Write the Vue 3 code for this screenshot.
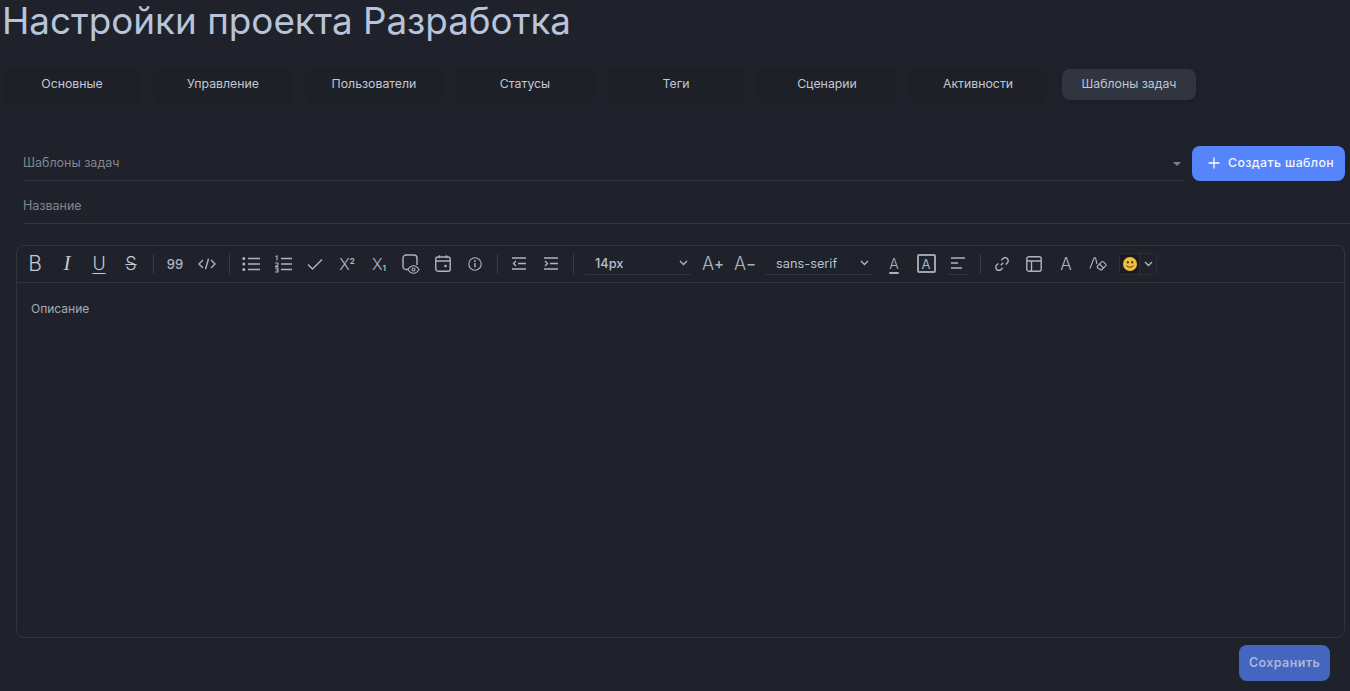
<script setup>
const tabs = ['Основные', 'Управление', 'Пользователи', 'Статусы', 'Теги', 'Сценарии', 'Активности', 'Шаблоны задач']
</script>

<template>
  <div class="page">
    <h1 class="title">Настройки проекта Разработка</h1>

    <div class="tabs">
      <button v-for="(t, i) in tabs" :key="t" class="tab" :class="{ active: i === tabs.length - 1 }">{{ t }}</button>
    </div>

    <div class="select-row">
      <div class="field select-field">
        <span>Шаблоны задач</span>
        <i class="caret"></i>
      </div>
      <button class="create">
        <svg width="12" height="12" viewBox="0 0 12 12"><path d="M6 .5v11M.5 6h11" stroke="#fff" stroke-width="1.3" fill="none"/></svg>
        <span>Создать шаблон</span>
      </button>
    </div>

    <div class="field name-field"><span>Название</span></div>

    <div class="editor">
      <div class="toolbar">
        <div class="tb t-big">B</div>
        <div class="tb t-big t-i">I</div>
        <div class="tb t-big t-u">U</div>
        <div class="tb t-big t-s">S</div>
        <div class="sep"></div>
        <div class="tb t-quote">99</div>
        <div class="tb">
          <svg width="18" height="12" viewBox="0 0 18 12"><path d="M5 2 1 6l4 4M13 2l4 4-4 4M10.500 .8 7.500 11.200" class="ic"/></svg>
        </div>
        <div class="sep"></div>
        <div class="tb">
          <svg width="18" height="16" viewBox="0 0 18 16"><path d="M6 2.500h12M6 8h12M6 13.500h12" class="ic"/><circle cx="1.800" cy="2.500" r="1.500" fill="#aeb4bf"/><circle cx="1.800" cy="8" r="1.500" fill="#aeb4bf"/><circle cx="1.800" cy="13.500" r="1.500" fill="#aeb4bf"/></svg>
        </div>
        <div class="tb">
          <svg width="18" height="18" viewBox="0 0 18 18"><path d="M7 3.500h11M7 9h11M7 14.500h11" class="ic"/><path d="M1.500 1.500 3 1v4.500M1 8h3v1.800L1.300 11.500M1 11.500h3.300M1 13h3v4H1M1.800 15h2" class="ic ic-thin"/></svg>
        </div>
        <div class="tb">
          <svg width="16" height="12" viewBox="0 0 16 12"><path d="M1 6.500 5.500 11 15 1.500" class="ic"/></svg>
        </div>
        <div class="tb t-script"><span>X</span><span class="t-up">2</span></div>
        <div class="tb t-script"><span>X</span><span class="t-down">1</span></div>
        <div class="tb">
          <svg width="18" height="20" viewBox="0 0 18 20"><path d="M6.500 15.500H4a3 3 0 0 1-3-3V4a3 3 0 0 1 3-3h8a3 3 0 0 1 3 3v7" class="ic"/><path d="M6 15.500c1.500-2.600 3.300-3.800 5.500-3.800s4 1.200 5.500 3.800c-1.500 2.600-3.300 3.800-5.500 3.800S7.500 18.100 6 15.500Z" class="ic ic-thin"/><circle cx="11.500" cy="15.500" r="1.500" class="ic ic-thin"/></svg>
        </div>
        <div class="tb">
          <svg width="16" height="17" viewBox="0 0 16 17"><rect x=".8" y="2" width="14.400" height="14.200" rx="2" class="ic"/><path d="M1 6h14M4.500 .3V3.300M11.500 .3V3.300" class="ic"/><circle cx="10.500" cy="11" r="1.300" fill="#aeb4bf"/></svg>
        </div>
        <div class="tb">
          <svg width="14" height="14" viewBox="0 0 14 14"><circle cx="7" cy="7" r="6.200" class="ic ic-thin"/><path d="M7 6v4.200" class="ic"/><circle cx="7" cy="4" r=".9" fill="#aeb4bf"/></svg>
        </div>
        <div class="sep"></div>
        <div class="tb">
          <svg width="14" height="13" viewBox="0 0 14 13"><path d="M0 1h14M0 12h14M6 6.500h8M4 4 1.500 6.500 4 9" class="ic"/></svg>
        </div>
        <div class="tb">
          <svg width="14" height="13" viewBox="0 0 14 13"><path d="M0 1h14M0 12h14M6 6.500h8M1 4 3.500 6.500 1 9" class="ic"/></svg>
        </div>
        <div class="sep"></div>
        <div class="pick pick-size">
          <span>14px</span>
          <svg width="9" height="6" viewBox="0 0 9 6"><path d="m1 1 3.500 3.500L8 1" class="ic"/></svg>
        </div>
        <div class="tb t-mid">A<span class="mark">+</span></div>
        <div class="tb t-mid">A<span class="mark">−</span></div>
        <div class="pick pick-font">
          <span>sans-serif</span>
          <svg width="9" height="6" viewBox="0 0 9 6"><path d="m1 1 3.500 3.500L8 1" class="ic"/></svg>
        </div>
        <div class="tb t-under">A</div>
        <div class="tb"><span class="boxed">A</span></div>
        <div class="tb">
          <span class="align-wrap">
            <svg width="14" height="12" viewBox="0 0 14 12"><path d="M0 1h14M0 6h7M0 11h11" class="ic"/></svg>
          </span>
        </div>
        <div class="sep"></div>
        <div class="tb">
          <svg width="14" height="14" viewBox="0 0 14 14"><path d="M5.800 8.200 8.200 5.800M6.300 3.200 7.900 1.600a3 3 0 0 1 4.400 4.400l-1.600 1.600M7.700 10.800 6.100 12.400a3 3 0 0 1-4.400-4.400l1.600-1.600" class="ic"/></svg>
        </div>
        <div class="tb">
          <svg width="16" height="16" viewBox="0 0 16 16"><rect x=".8" y=".8" width="14.400" height="14.400" rx="2" class="ic"/><path d="M1 5h14M5.500 5v10" class="ic"/></svg>
        </div>
        <div class="tb t-plain">A</div>
        <div class="tb">
          <svg width="18" height="15" viewBox="0 0 18 15"><path d="M1 12.500 4.800 2.500c.3-.8 1-1.200 1.700-.6L8 8" class="ic ic-thin"/><path d="m8.500 10 4.200-4.200a1.200 1.200 0 0 1 1.700 0l2.300 2.300a1.200 1.200 0 0 1 0 1.700L13 13.500a1.200 1.200 0 0 1-1.700 0L8.500 11.700a1.200 1.200 0 0 1 0-1.700ZM10.500 8l4 4" class="ic ic-thin"/></svg>
        </div>
        <div class="emoji">
          <span class="emoji-face">
            <svg width="14" height="14" viewBox="0 0 14 14"><circle cx="7" cy="7" r="7" fill="#f2bf3c"/><ellipse cx="4.800" cy="5.300" rx="1" ry="1.300" fill="#4a3a1a"/><ellipse cx="9.200" cy="5.300" rx="1" ry="1.300" fill="#4a3a1a"/><path d="M3.500 8.500c1 2.200 6 2.200 7 0" stroke="#4a3a1a" stroke-width="1" fill="none"/></svg>
          </span>
          <span class="emoji-arrow">
            <svg width="9" height="6" viewBox="0 0 9 6"><path d="m1 1 3.500 3.500L8 1" class="ic"/></svg>
          </span>
        </div>
      </div>
      <div class="body-text">Описание</div>
    </div>

    <div class="footer">
      <button class="save">Сохранить</button>
    </div>
  </div>
</template>

<style scoped>
.page {
  height: 691px;
  overflow: hidden;
  background: #1f222a;
  font-family: Inter, "Noto Sans", sans-serif;
  color: #c9d1de;
  box-sizing: border-box;
}
button { font-family: inherit; border: 0; cursor: pointer; }
.title {
  margin: 0;
  padding-left: 2px;
  font-size: 36.8px;
  line-height: 42px;
  font-weight: 400;
  color: #b7c4da;
}
.tabs {
  display: flex;
  gap: 17px;
  padding: 27px 0 0 5px;
}
.tab {
  width: 134px;
  height: 31px;
  padding: 0 0 2px;
  border-radius: 8px;
  background: #1e2027;
  color: #c0c8d6;
  font-size: 12.300px;
  box-shadow: 0 1px 4px rgba(0, 0, 0, .2);
}
.tab.active { background: #31353f; color: #bcc6d8; }
.select-row {
  display: flex;
  align-items: flex-start;
  gap: 8px;
  margin-top: 46px;
  padding-left: 23px;
}
.field {
  display: flex;
  align-items: center;
  font-size: 12.500px;
  color: #82868f;
  border-bottom: 1px solid #343842;
  box-sizing: border-box;
}
.select-field {
  width: 1161px;
  height: 35px;
  justify-content: space-between;
  padding: 0 3px 1px 0;
}
.caret {
  width: 0;
  height: 0;
  border-left: 4px solid transparent;
  border-right: 4px solid transparent;
  border-top: 4px solid #7b7f88;
  margin-top: 2px;
}
.create {
  width: 153px;
  height: 35px;
  padding: 0 0 2px 16px;
  border-radius: 8px;
  background: #5584fb;
  color: #f2f5fb;
  font-size: 12.300px;
  font-weight: 500;
  letter-spacing: .4px;
  display: flex;
  align-items: center;
  gap: 8px;
}
.name-field {
  margin: 7px 0 0 23px;
  height: 36px;
}
.editor {
  margin: 21px 0 0 16px;
  width: 1329px;
  height: 393px;
  border: 1px solid #30343d;
  border-radius: 8px;
  box-sizing: border-box;
}
.toolbar {
  display: flex;
  align-items: center;
  height: 36.500px;
  padding-left: 2px;
  border-bottom: 1px solid #30343d;
  box-sizing: border-box;
}
.tb {
  width: 32px;
  height: 32px;
  flex: none;
  display: flex;
  align-items: center;
  justify-content: center;
  color: #aeb4bf;
  white-space: nowrap;
}
.ic {
  fill: none;
  stroke: #aeb4bf;
  stroke-width: 1.4;
}
.ic-thin { stroke-width: 1.1; }
.sep {
  flex: none;
  width: 1px;
  height: 20px;
  margin: 0 5.5px;
  background: #383c46;
}
.t-big { font-size: 21px; font-weight: 300; color: #c2c7d0; }
.t-i { font-family: "Liberation Serif", serif; font-style: italic; font-size: 21px; }
.t-u { text-decoration: underline; text-underline-offset: 3px; text-decoration-thickness: 1px; font-size: 18px; }
.t-s { text-decoration: line-through; text-decoration-thickness: 1px; font-size: 18px; }
.t-quote { font-size: 13px; font-weight: 500; }
.t-script { font-size: 16px; font-weight: 300; }
.t-up { font-size: 8px; font-weight: 700; align-self: flex-start; margin-top: 8px; }
.t-down { font-size: 8px; font-weight: 700; align-self: flex-end; margin-bottom: 7px; }
.t-mid { font-size: 18px; font-weight: 300; }
.mark { font-size: 15px; font-weight: 500; }
.t-under { font-size: 14px; font-weight: 300; text-decoration: underline; text-underline-offset: 3px; text-decoration-thickness: 1.5px; }
.t-plain { font-size: 17px; font-weight: 300; }
.boxed {
  width: 19px;
  height: 19px;
  border: 2px solid #9ea4af;
  border-radius: 2px;
  box-sizing: border-box;
  display: flex;
  align-items: center;
  justify-content: center;
  font-size: 13px;
}
.align-wrap {
  display: flex;
  padding: 0 3px 5px;
  margin-top: 5px;
  border-bottom: 1px solid #30343d;
}
.pick {
  flex: none;
  height: 22px;
  display: flex;
  align-items: center;
  justify-content: space-between;
  box-sizing: border-box;
  border-bottom: 1px solid #30343d;
  color: #b4c0d2;
  font-size: 12.800px;
}
.pick-size { width: 106px; margin: 0 6px; padding: 0 3px 0 10px; font-weight: 500; }
.pick-font { width: 107px; margin: 0 6px 0 4px; padding: 0 3px 0 11px; }
.emoji {
  margin-left: 5px;
  width: 38px;
  height: 22px;
  display: flex;
  border: 1px solid #2b2e37;
  border-radius: 3px;
  box-sizing: border-box;
}
.emoji-face {
  width: 19px;
  display: flex;
  align-items: center;
  justify-content: center;
  background: #1a1c22;
  border-right: 1px solid #2b2e37;
}
.emoji-arrow {
  flex: 1;
  display: flex;
  align-items: center;
  justify-content: center;
}
.body-text {
  padding: 18px 14px;
  font-family: Inter, sans-serif;
  font-size: 12px;
  line-height: 16px;
  color: #a7abb3;
}
.footer {
  display: flex;
  justify-content: flex-end;
  padding: 7px 20px 0 0;
}
.save {
  width: 91px;
  height: 36px;
  padding: 0 0 2px;
  border-radius: 8px;
  background: #4466bf;
  color: #a9b8d8;
  font-size: 12.500px;
  font-weight: 600;
  letter-spacing: .4px;
}
</style>
